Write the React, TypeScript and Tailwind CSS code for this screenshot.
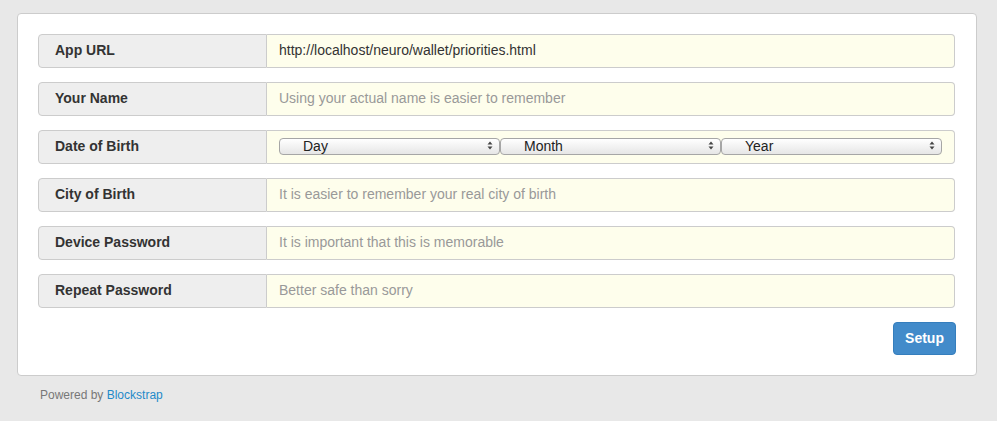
import React from "react";

interface Row {
  label: string;
  value?: string;
  placeholder?: string;
  kind?: "select";
}

const rows: Row[] = [
  { label: "App URL", value: "http://localhost/neuro/wallet/priorities.html" },
  { label: "Your Name", placeholder: "Using your actual name is easier to remember" },
  { label: "Date of Birth", kind: "select" },
  { label: "City of Birth", placeholder: "It is easier to remember your real city of birth" },
  { label: "Device Password", placeholder: "It is important that this is memorable" },
  { label: "Repeat Password", placeholder: "Better safe than sorry" },
];

function Arrows() {
  return (
    <svg width="6" height="9" viewBox="0 0 6 9" className="shrink-0">
      <path d="M3 0.5 L5.5 3.5 L0.5 3.5 Z" fill="#444" />
      <path d="M3 8.5 L5.5 5.5 L0.5 5.5 Z" fill="#444" />
    </svg>
  );
}

function FakeSelect({ label }: { label: string }) {
  return (
    <div className="flex-1 h-[17px] flex items-center justify-between pl-[23px] pr-[6px] pb-px rounded-[4px] border border-[#a6a6a6] bg-gradient-to-b from-white to-[#e6e6e6] text-[14px] leading-none text-[#222]">
      <span>{label}</span>
      <Arrows />
    </div>
  );
}

function FieldRow({ row }: { row: Row }) {
  return (
    <div className="flex h-[34px] w-full">
      <div className="w-[229px] shrink-0 flex items-center pl-4 pb-[2px] bg-[#eeeeee] border border-[#cccccc] rounded-l-[4px] text-[14px] font-bold text-[#333]">
        {row.label}
      </div>
      <div className="flex-1 flex items-center pb-[2px] border border-l-0 border-[#cccccc] rounded-r-[4px] bg-[#fefeec] text-[14px]">
        {row.kind === "select" ? (
          <div className="flex w-full pl-3 pr-3">
            <FakeSelect label="Day" />
            <FakeSelect label="Month" />
            <FakeSelect label="Year" />
          </div>
        ) : row.value ? (
          <span className="pl-3 text-[#333]">{row.value}</span>
        ) : (
          <span className="pl-3 text-[#999]">{row.placeholder}</span>
        )}
      </div>
    </div>
  );
}

export default function App() {
  return (
    <div className="w-[997px] h-[421px] bg-[#e8e8e8] pt-[13px] pl-[17px] font-['Liberation_Sans',Arial,sans-serif]">
      <div className="w-[960px] bg-white border border-[#cccccc] rounded-[4px] p-5">
        <div className="flex flex-col gap-[14px] w-[917px]">
          {rows.map((row) => (
            <FieldRow key={row.label} row={row} />
          ))}
        </div>
        <div className="flex justify-end mt-[14px]">
          <button className="w-[63px] h-[33px] pb-px rounded-[4px] bg-[#428bca] border border-[#357ebd] text-white text-[14px] font-bold">
            Setup
          </button>
        </div>
      </div>
      <div className="pl-[23px] pt-[10px] text-[12px] text-[#777]">
        Powered by <span className="text-[#1f8ac9]">Blockstrap</span>
      </div>
    </div>
  );
}
